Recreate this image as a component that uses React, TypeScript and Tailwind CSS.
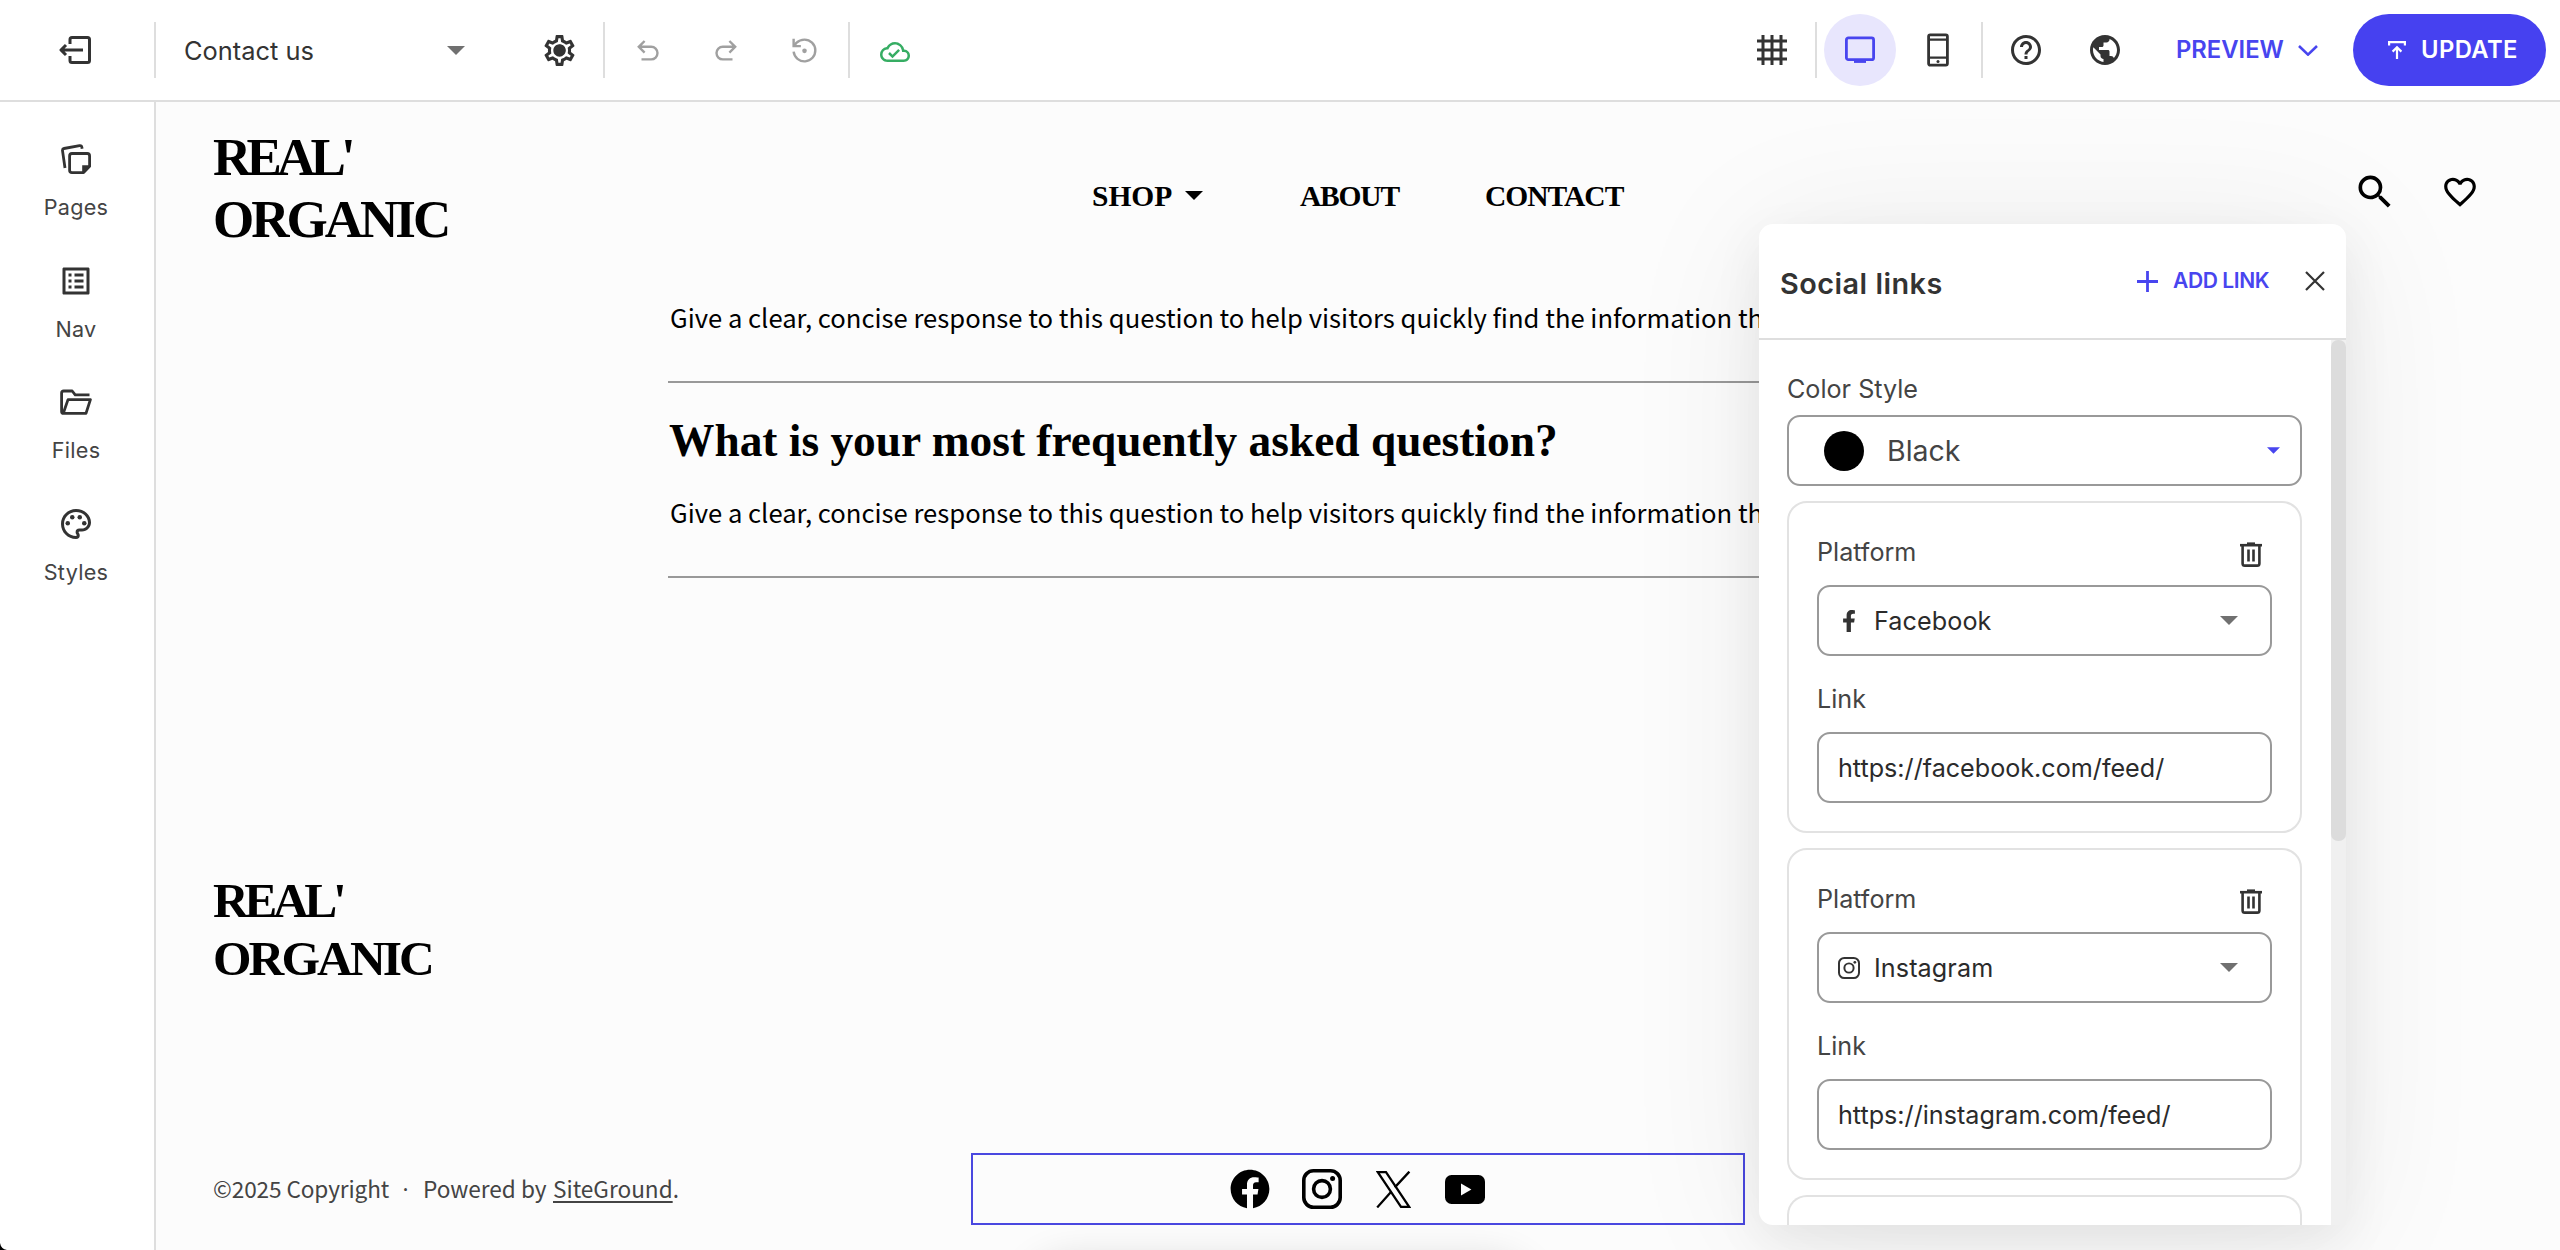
import React, { useState } from 'react';
import {
  MdFavoriteBorder, MdGrid4X4, MdHelpOutline, MdOutlineCloudDone, MdOutlineListAlt,
  MdOutlinePalette, MdOutlineSettings, MdPublic, MdSearch,
} from 'react-icons/md';
import { FaFacebook, FaFacebookF } from 'react-icons/fa';
import { clsx } from 'clsx';

type IconProps = { className?: string };
type Platform = 'Facebook' | 'Instagram';

const ExitIcon = () => (
  <svg width="32" height="28" viewBox="0 0 32 28" fill="none" stroke="currentColor" strokeWidth="3" strokeLinejoin="round">
    <path d="M11 8V3.5Q11 1.5 13 1.5H28.5Q30.5 1.5 30.5 3.5V24.5Q30.5 26.5 28.5 26.5H13Q11 26.5 11 24.5V20" />
    <path d="M24 14H2M7 9 2 14l5 5" />
  </svg>
);

const UndoIcon = ({ className }: IconProps) => (
  <svg className={className} width="22" height="21" viewBox="0 0 22 21" fill="none" stroke="currentColor" strokeWidth="2.4">
    <path d="M7.6 1 1.8 6.8l5.8 5.8M2 6.8h12.2a6.3 6.3 0 0 1 0 12.6H4.5" />
  </svg>
);

const RestoreIcon = () => (
  <svg width="29" height="29" viewBox="0 0 24 24" fill="none" stroke="currentColor" strokeWidth="2">
    <path d="M3 13a9 9 0 1 0 9-10 9.75 9.75 0 0 0-6.74 2.74L3.4 8" />
    <path d="M3 2.2V8.4h6" />
    <circle cx="12" cy="12.3" r="1.9" fill="currentColor" stroke="none" />
  </svg>
);

const DesktopIcon = () => (
  <svg width="30" height="28" viewBox="0 0 30 28" fill="none" stroke="currentColor" strokeWidth="2.8">
    <rect x="1.4" y="1.9" width="27.2" height="21.8" rx="2" />
    <path d="M9 25.2h12" strokeWidth="3.4" />
  </svg>
);

const PhoneIcon = () => (
  <svg width="22" height="34" viewBox="0 0 22 34" fill="none" stroke="currentColor" strokeWidth="2.8">
    <rect x="1.6" y="1.8" width="18.8" height="30.4" rx="1.6" />
    <path d="M1.6 6.6h18.8M1.6 24.6h18.8" strokeWidth="2.4" />
    <circle cx="11" cy="28.4" r="1.5" fill="currentColor" stroke="none" />
  </svg>
);

const UploadIcon = () => (
  <svg width="18" height="18" viewBox="0 0 18 18" fill="none" stroke="currentColor" strokeWidth="2.2">
    <path d="M1.1 4.6V1.1h15.8v3.5M9 18V6.5M4.6 10.6 9 6.2l4.4 4.4" />
  </svg>
);

const PagesIcon = () => (
  <svg width="30" height="30" viewBox="0 0 30 30" fill="none" stroke="currentColor" strokeWidth="2.8" strokeLinejoin="round">
    <path d="M4 24 1.5 6.6Q1.3 4.8 3 4.5L18.6 1.7Q20.6 1.4 20.9 3.4L21.1 4.8" />
    <path d="M11 9.5H26.2Q28.6 9.5 28.6 11.9V22.4L22.6 28.6H11Q8.6 28.6 8.6 26.2V11.9Q8.6 9.5 11 9.5Z" />
    <path d="M28.6 21.2V22.6L22.6 28.6H21.2V21.2Z" fill="currentColor" stroke="none" />
  </svg>
);

const FolderIcon = () => (
  <svg width="32" height="26" viewBox="0 0 32 26" fill="none" stroke="currentColor" strokeWidth="2.8" strokeLinejoin="round">
    <path d="M29.5 5.8H15.2L12.2 2H3.6Q1.6 2 1.6 4V22.4Q1.6 24.4 3.6 24.4H26L30.4 10.6H8L3.4 24" />
  </svg>
);

const TrashIcon = () => (
  <svg width="22" height="25" viewBox="0 0 22 25" fill="none" stroke="currentColor" strokeWidth="2.6">
    <path d="M0 3.2h22" />
    <path d="M7 1.4h8" strokeWidth="2" />
    <path d="M2.6 3.2V21.4Q2.6 23.6 4.8 23.6H17.2Q19.4 23.6 19.4 21.4V3.2M8.5 7.6V19.6M13.5 7.6V19.6" />
  </svg>
);

const Caret = ({ className }: IconProps) => (
  <svg className={className} viewBox="0 0 18 9" fill="currentColor"><path d="M0 0h18L9 9z" /></svg>
);

const InstagramIcon = ({ className }: IconProps) => (
  <svg className={className} viewBox="0 0 40 40" fill="none" stroke="currentColor" strokeWidth="3.6">
    <rect x="1.8" y="1.8" width="36.4" height="36.4" rx="9.6" />
    <circle cx="20" cy="20" r="8.4" />
    <circle cx="30.6" cy="9.6" r="2.5" fill="currentColor" stroke="none" />
  </svg>
);

const XIcon = () => (
  <svg width="35" height="37" viewBox="0 0 35 37" fill="none" stroke="currentColor" strokeWidth="2.3">
    <path d="M1.8 1.2H10L33.2 35.8H25Z" />
    <path d="M33.4.6 18.8 16.4M1.2 36.4 15.4 20.4" />
  </svg>
);

const YoutubeIcon = () => (
  <svg width="40" height="29" viewBox="0 0 40 29">
    <rect width="40" height="29" rx="6.5" fill="currentColor" />
    <path d="M16 8.4 26.4 14.5 16 20.6z" fill="#fcfcfc" />
  </svg>
);

const SIDEBAR = [
  { label: 'Pages', icon: <PagesIcon /> },
  { label: 'Nav', icon: <MdOutlineListAlt size={36} /> },
  { label: 'Files', icon: <FolderIcon /> },
  { label: 'Styles', icon: <MdOutlinePalette size={36} /> },
];

const LINKS: { platform: Platform; url: string }[] = [
  { platform: 'Facebook', url: 'https://facebook.com/feed/' },
  { platform: 'Instagram', url: 'https://instagram.com/feed/' },
];

const ANSWER = 'Give a clear, concise response to this question to help visitors quickly find the information they need.';

const Divider = ({ className }: IconProps) => <div className={clsx('h-14 w-0.5 shrink-0 bg-[#dedede]', className)} />;

const Toolbar = () => {
  const [device, setDevice] = useState<'desktop' | 'phone'>('desktop');

  return (
    <header className="flex h-[102px] shrink-0 items-center border-b-2 border-[#dedede] bg-white text-[#333]">
      <button className="flex w-[154px] justify-center pr-1"><ExitIcon /></button>
      <Divider />
      <button className="ml-7 flex w-[281px] items-center justify-between">
        <span className="pt-px text-[25.4px] leading-8">Contact us</span>
        <Caret className="h-[9px] w-[18px] text-[#707070]" />
      </button>
      <button className="relative ml-[76px]">
        <MdOutlineSettings size={37} />
        <span className="absolute top-1/2 left-1/2 size-[11px] -translate-1/2 rounded-full bg-[#333]" />
      </button>
      <Divider className="ml-[25px]" />
      <UndoIcon className="ml-8 text-[#a0a0a0]" />
      <UndoIcon className="ml-14 -scale-x-100 text-[#a0a0a0]" />
      <span className="ml-[53px] text-[#a0a0a0]"><RestoreIcon /></span>
      <Divider className="ml-[29px]" />
      <MdOutlineCloudDone size={30} className="mt-1 ml-[30px] text-[#36ad63]" />

      <div className="ml-auto flex items-center pr-[14px]">
        <MdGrid4X4 size={36} />
        <Divider className="ml-[25px]" />
        <button
          onClick={() => setDevice('desktop')}
          className={clsx(
            'ml-[7px] flex size-[72px] items-center justify-center rounded-full',
            device === 'desktop' && 'bg-[#e8e6fd] text-[#4845ef]'
          )}
        >
          <DesktopIcon />
        </button>
        <button onClick={() => setDevice('phone')} className="ml-[31px]"><PhoneIcon /></button>
        <Divider className="ml-8" />
        <MdHelpOutline size={36} className="ml-[25px]" />
        <MdPublic size={36} className="ml-[43px]" />
        <button className="ml-[53px] flex items-center text-[#4845ef]">
          <span className="w-[122px] text-left text-[23.8px] leading-8 font-semibold">PREVIEW</span>
          <svg width="20" height="11" viewBox="0 0 20 11" fill="none" stroke="currentColor" strokeWidth="2.6">
            <path d="m1 1 9 8.6L19 1" />
          </svg>
        </button>
        <button className="ml-[35px] flex h-[72px] w-[193px] items-center rounded-full bg-[#4641f0] pl-[35px] text-white">
          <UploadIcon />
          <span className="ml-[15px] text-[23.8px] leading-8 font-semibold tracking-[0.4px]">UPDATE</span>
        </button>
      </div>
    </header>
  );
};

const Sidebar = () => (
  <nav className="flex w-[156px] shrink-0 flex-col gap-[41px] border-r-2 border-[#dedede] bg-white pt-[39px] pr-0.5 text-[#333]">
    {SIDEBAR.map(({ label, icon }) => (
      <button key={label} className="flex flex-col items-center gap-[17px]">
        <span className="flex h-9 items-center">{icon}</span>
        <span className="text-[21.6px] leading-[27.5px] tracking-[0.3px] text-[#444]">{label}</span>
      </button>
    ))}
  </nav>
);

const SitePage = () => (
  <main className="flex min-w-0 flex-1 flex-col bg-[#fcfcfc] text-black">
    <div className="flex h-[178px] shrink-0 pl-[57px] font-['Liberation_Serif',serif] font-bold">
      <div className="w-[879px] pt-6 text-[53px] leading-[62px]">
        <div className="tracking-[-4.8px]">REAL'</div>
        <div className="tracking-[-3px]">ORGANIC</div>
      </div>
      <div className="flex h-[189px] items-center text-[29.5px]">
        <span className="w-[93px]">SHOP</span>
        <Caret className="-mt-0.5 h-[9px] w-[18px]" />
        <span className="ml-[97px] w-[185px] tracking-[-1.2px]">ABOUT</span>
        <span className="tracking-[-1px]">CONTACT</span>
      </div>
      <div className="mr-[81px] ml-auto flex h-[180px] items-center gap-11">
        <MdSearch size={44} />
        <MdFavoriteBorder size={38} />
      </div>
    </div>

    <section className="ml-[512px] w-[1378px] shrink-0 font-['Noto_Sans_CJK_SC',sans-serif] text-[25.63px] leading-10 whitespace-nowrap">
      <p className="box-content mt-[17px] h-[84px] border-b-2 border-[#999] pl-0.5">{ANSWER}</p>
      <h2 className="mt-[28px] pl-px font-['Liberation_Serif',serif] text-[45.4px] leading-[60px] font-bold">
        What is your most frequently asked question?
      </h2>
      <p className="box-content mt-[21px] h-[84px] border-b-2 border-[#999] pl-0.5">{ANSWER}</p>
    </section>

    <footer className="mt-[294px] pl-[57px]">
      <div className="font-['Liberation_Serif',serif] text-[49.5px] leading-[58px] font-bold">
        <div className="tracking-[-4.4px]">REAL'</div>
        <div className="tracking-[-2.9px]">ORGANIC</div>
      </div>
      <div className="mt-[165px] flex h-[72px] items-center">
        <p className="-mt-px flex w-[758px] font-['Noto_Sans_CJK_SC',sans-serif] text-[22.6px] leading-8 whitespace-nowrap text-[#444]">
          <span className="w-[180px] tracking-[-0.1px]">©2025 Copyright</span>
          <span className="w-[30px] pr-[5px] text-center font-['Noto_Sans',sans-serif]">·</span>
          <span className="w-[130px]">Powered by</span>
          <span className="underline decoration-2 underline-offset-[3px]">SiteGround</span>
          <span>.</span>
        </p>
        <div className="flex h-[72px] w-[774px] items-center gap-8 border-2 border-[#4a48e0] bg-[#fcfcfc] pl-[257px]">
          <FaFacebook size={40} />
          <InstagramIcon className="size-10" />
          <span className="mx-[2px]"><XIcon /></span>
          <YoutubeIcon />
        </div>
      </div>
    </footer>
  </main>
);

const PLATFORM_ICONS: Record<Platform, React.ReactNode> = {
  Facebook: <FaFacebookF size={22} />,
  Instagram: <InstagramIcon className="size-[22px]" />,
};

const LinkCard = ({ platform, url }: { platform: Platform; url: string }) => (
  <div className="h-[332px] shrink-0 rounded-[20px] border-2 border-[#e2e2e2] px-7 pt-[33px]">
    <div className="flex h-8 items-center justify-between pr-2.5">
      <span>Platform</span>
      <span className="mt-1 text-[#333]"><TrashIcon /></span>
    </div>
    <button className="mt-[17px] flex h-[71px] w-full items-center rounded-[13px] border-2 border-[#999] pr-8 pl-[19px] text-[#2b2b2b]">
      <span className="flex w-[22px] justify-center text-[#333]">{PLATFORM_ICONS[platform]}</span>
      <span className="ml-[14px] pt-px tracking-[0.1px]">{platform}</span>
      <Caret className="ml-auto h-[9px] w-[18px] text-[#707070]" />
    </button>
    <div className="mt-[27px] h-8">Link</div>
    <div className="mt-[17px] flex h-[71px] items-center rounded-[13px] border-2 border-[#999] pt-px pl-[19px] text-[#2b2b2b]">{url}</div>
  </div>
);

const SocialLinksPanel = () => (
  <aside className="absolute top-[224px] left-[1759px] flex h-[1001px] w-[587px] flex-col overflow-hidden rounded-[14px] rounded-br-none bg-white text-[#444] shadow-[0_16px_50px_rgba(0,0,0,0.07),0_10px_150px_rgba(0,0,0,0.07)]">
    <div className="flex h-[116px] shrink-0 items-center border-b-2 border-[#dedede] pl-[21px] text-[#333]">
      <h3 className="mt-1.5 w-[357px] text-[28.8px] leading-9 font-semibold tracking-[0.5px]">Social links</h3>
      <button className="flex items-center text-[#4845ef]">
        <svg width="21" height="21" viewBox="0 0 21 21" stroke="currentColor" strokeWidth="2.8"><path d="M10.5 0v21M0 10.5h21" /></svg>
        <span className="w-[133px] pl-[15px] text-left text-[21px] leading-8 font-semibold tracking-[-0.4px]">ADD LINK</span>
      </button>
      <svg className="ml-[14px]" width="20" height="20" viewBox="0 0 20 20" stroke="currentColor" strokeWidth="2.2"><path d="m1 1 18 18M19 1 1 19" /></svg>
    </div>
    <div className="flex min-h-0 flex-1">
      <div className="flex w-[572px] flex-col overflow-hidden pt-[33px] pr-[29px] pl-7 text-[25.15px] leading-8">
        <div>Color Style</div>
        <button className="mt-[10px] flex h-[71px] shrink-0 items-center rounded-[13px] border-2 border-[#999] pr-5 pl-[35px]">
          <span className="size-10 rounded-full bg-black" />
          <span className="ml-[23px] pt-px text-[28.5px]">Black</span>
          <Caret className="ml-auto h-[7px] w-[13px] text-[#4845ef]" />
        </button>
        <div className="mt-[15px] flex min-h-0 flex-1 flex-col gap-[15px]">
          {LINKS.map(link => <LinkCard key={link.platform} {...link} />)}
          {/* next card peeks in at the scroll edge */}
          <div className="flex-1 rounded-t-[20px] border-2 border-b-0 border-[#e2e2e2]" />
        </div>
      </div>
      <div className="w-[15px] bg-[#f0f0f0]">
        <div className="h-[501px] rounded-[7px] bg-[#dcdcdc]" />
      </div>
    </div>
  </aside>
);

export default function App() {
  return (
    <div className="relative flex h-[1250px] w-full flex-col overflow-hidden bg-white font-[Inter,sans-serif]">
      <Toolbar />
      <div className="flex min-h-0 flex-1">
        <Sidebar />
        <SitePage />
      </div>
      {/* floating block toolbar sits just below the fold, only its shadow shows */}
      <div className="absolute top-[1262px] left-[1030px] h-20 w-[500px] rounded-full shadow-[0_0_40px_rgba(0,0,0,0.16)]" />
      <SocialLinksPanel />
      <svg className="absolute bottom-0 left-0" width="7" height="7" viewBox="0 0 7 7"><path d="M0 0Q1 6 7 7H0z" /></svg>
    </div>
  );
}
